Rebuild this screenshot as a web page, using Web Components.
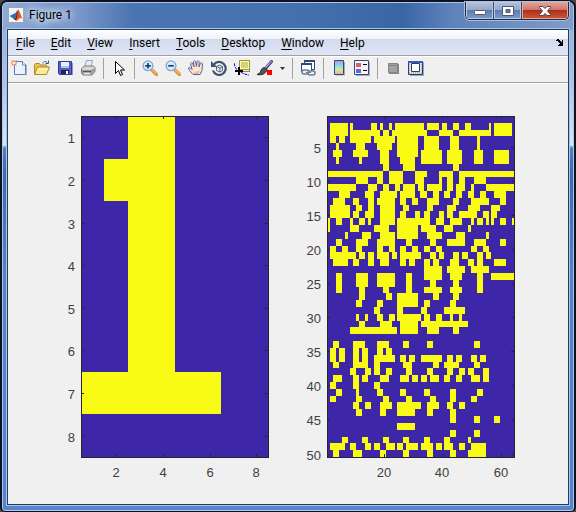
<!DOCTYPE html>
<html lang="en">
<head>
<meta charset="utf-8">
<title>Figure 1</title>
<style>
  html, body { height: 100%; }
  body { margin: 0; background: #4a4a4c; font: 12px/16px Roboto, "Open Sans", sans-serif; color: #000; }
</style>
</head>
<body>
<figure-window caption="Figure 1">
  <menu-bar slot="menu" items="File,Edit,View,Insert,Tools,Desktop,Window,Help"></menu-bar>
  <tool-bar slot="tools"></tool-bar>
  <axes-plot data-set="digit"></axes-plot>
  <axes-plot data-set="features"></axes-plot>
</figure-window>

<script>
const define = (name, markup, setup) => {
  const template = document.createElement('template');
  template.innerHTML = markup;
  customElements.define(name, class extends HTMLElement {
    constructor() {
      super();
      this.attachShadow({ mode: 'open' }).append(template.content.cloneNode(true));
    }
    connectedCallback() { if (setup) setup(this, this.shadowRoot); }
  });
};

define('figure-window', `
<style>
  :host { display: flex; flex-direction: column; box-sizing: border-box; min-height: 100vh;
    padding: 0 5px 6px; border: 1px solid #10131f; border-width: 2px 2px 1px; border-radius: 7px 7px 5px 5px;
    box-shadow: inset 0 0 0 1px #a9c6ec;
    background:
      linear-gradient(90deg, #8fa9d5 0, #7795c7 80px, #4b74b2 130px, #4470ae 300px, #3a66a6 400px, #5f82bb 450px, #7f9cca 100%) top / 100% 28px no-repeat,
      linear-gradient(#8ca8d6, #a9c0e4 70px, #dbe5f5 143px, #4f7fc4 146px, #3f69ad 172px, #5583c8 270px, #5585cc) top; }
  header { display: flex; align-items: flex-start; height: 27px; }
  .logo { width: 16px; height: 16px; margin: 5px 5px 0 1px; }
  h1 { flex: 1; margin: 5px 0 0; font: inherit; line-height: 16px; text-shadow: 0 0 6px #dce6f5, 0 0 8px #dce6f5, 0 0 10px #dce6f5; }
  .controls { display: flex; height: 17px; border: 1px solid #202a3c; border-top: 0; border-radius: 0 0 5px 5px; overflow: hidden; box-shadow: 0 0 0 1px #a9c0e3; }
  button { display: flex; align-items: center; justify-content: center; width: 28px; padding: 0; border: 0; border-right: 1px solid #3a4a68;
    background: linear-gradient(#b4c2da, #93a7ca 48%, #5f7cae 50%, #7c9aca); box-shadow: inset 0 0 0 1px #b8c9e3; }
  .close { width: 46px; border: 0; background: linear-gradient(#e0a79a, #cf7365 48%, #b0301b 50%, #c95a3c); box-shadow: inset 0 0 0 1px #e5a79a; }
  main { flex: 1; display: flex; flex-direction: column; border: 1px solid #2a3b5c; background: #f0f0f0; box-shadow: 0 0 0 1px #a5c4ea; }
  .plots { display: grid; grid-template-columns: 1fr 1fr; }
</style>
<header>
  <svg class="logo" viewBox="0 0 16 16"><path fill="#f2f4f8" stroke="#9aa5b8" d="M.5.5h15v15H.5z"/><path fill="#2c6fb2" d="m1.500 9 4-2 2-1 2-3-1 6-2.500 3z"/><path fill="#7a1f12" d="m5.500 12 2-1.500L10 2.500l1 3-1 5-2 3z"/><path fill="#e4591a" d="M10 2.500c1 0 2.500 5 4.500 9.500-2-1.500-3-1-4 .5-.8 1-1.500 1.500-2.500 1 1.500-3 1.500-7 2-11z"/></svg>
  <h1></h1>
  <div class="controls">
    <button aria-label="Minimize"><svg width="14" height="10"><rect x="1.500" y="4.500" width="11" height="4" rx="1" fill="#fff" stroke="#4b5870"/></svg></button>
    <button aria-label="Maximize"><svg width="14" height="12"><path fill="#fff" fill-rule="evenodd" stroke="#4b5870" d="M1.500 1.500h11v9h-11zM5 4.500h4v3H5z"/></svg></button>
    <button class="close" aria-label="Close"><svg width="14" height="12"><path fill="#fff" stroke="#5a3d48" d="M1.500 1.500h3.500l2 2 2-2h3.500v1L9.500 6l3 3.500v1H9l-2-2-2 2H1.500v-1l3-3.500-3-3.500z"/></svg></button>
  </div>
</header>
<main>
  <slot name="menu"></slot>
  <slot name="tools"></slot>
  <div class="plots"><slot></slot></div>
</main>`,
(el, root) => { root.querySelector('h1').textContent = el.getAttribute('caption'); });

define('menu-bar', `
<style>
  :host { display: flex; align-items: center; height: 25px; border-bottom: 1px solid #a0a0a0;
    background: linear-gradient(#fff, #eef2fa 35%, #d3daec 37%, #e0e6f6); }
  nav { display: flex; flex: 1; }
  button { margin: 0; padding: 0 8px; border: 0; background: none; font: inherit; color: inherit; }
  button.arrow { padding: 0 4px; line-height: 0; }
  u { text-underline-offset: 2px; text-decoration-skip-ink: none; }
</style>
<nav></nav>
<button class="arrow" aria-label="Dock figure"><svg width="8" height="7" shape-rendering="crispEdges"><path d="M1 0h2v1h1v1h1v1h1V1h1v6H2V6h1V5h1V4H3V3H2V2H0V1h1z"/></svg></button>`,
(el, root) => {
  root.querySelector('nav').innerHTML = el.getAttribute('items').split(',')
    .map(t => `<button><u>${t[0]}</u>${t.slice(1)}</button>`).join('');
});

const lens = sign => `<path stroke="#e0953c" stroke-width="3.500" stroke-linecap="round" d="m10.500 10.500 4 4"/><path stroke="#f7cf92" stroke-linecap="round" d="m10.500 10 4 4"/><circle cx="6" cy="5.800" r="4.900" fill="#d5eef8" stroke="#7fa6d6" stroke-width="1.300"/><path stroke="#1c3e78" stroke-width="1.700" d="${sign}"/>`;
const icons = {
  'New Figure': `<path fill="#aab4c4" d="M5 15h11V5l-1-1v10H5z"/><path fill="#eaf3fd" stroke="#5f7fb4" d="M3.500 1.500h8l3 3.500v9.500h-11z"/><path fill="#fff" stroke="#5f7fb4" d="M11.500 1.500V5h3"/><path stroke="#e07040" d="M3 0v6M0 3h6M.5.5l5 5m0-5-5 5"/><circle cx="3" cy="3" r="1.500" fill="#fff0b8"/>`,
  'Open File': `<path fill="#e9c654" stroke="#b08a24" d="M.5 14V4.500l1-1h4l1 1.500h6v3"/><path fill="#fbea92" stroke="#b08a24" d="m.5 14.500 3-7.500h12l-3 7.500z"/><path fill="#fff4b8" d="M4.500 8h9l-.5 2H4z"/><path stroke="#3b5b86" d="M8.500 3.500c2-3 4-2.500 5 0M11.500 3.500h3v-3"/>`,
  'Save Figure': `<path fill="#8f95b5" d="M2 15h14V3h-1v11H2z"/><path fill="#4f5fd0" stroke="#2f3b9c" d="M1.500 1.500h13v13h-12l-1-1z"/><path fill="#e8effc" d="M4 2h8v6H4z"/><path fill="#b2c1ea" d="M4 6h8v2H4z"/><path fill="#20264e" d="M4 10h8v4H4z"/><path fill="#fff" d="M9 11h2v3H9z"/>`,
  'Print Figure': `<path fill="#e2eefb" stroke="#90a5bd" d="m4.500 7 2-6.500h6L11 7"/><path fill="#d6d6d4" stroke="#777" d="m1.500 8.500 3-2.500h9l1.500 1.500v4l-3 3.500h-9l-1.500-2z"/><path fill="#9c9c9c" d="m2 10h9.500l3-2v3l-3 3.500H3l-1-2z"/><path stroke="#555" d="M3 11.500h8"/><path stroke="#e7e7e7" stroke-width="1.500" d="M4 13.500h6"/><path stroke="#6cb04c" d="M12.500 10h1"/>`,
  'Edit Plot': `<path fill="#fff" stroke="#000" d="M4.500 1.500v12l3-3 2 5 2-1-2-4.500h4z"/>`,
  'Zoom In': lens('M6 3v5.600M3.200 5.800h5.600'),
  'Zoom Out': lens('M3.200 5.800h5.600'),
  'Pan': `<path fill="#ffe3cc" stroke="#4b679f" d="m5 14.500-3.500-4-1-2.500L2 7.500l2 2-1.500-6 1-1 1 .5L6 7 5.500 1.500l1-1 1 1L8.500 6.500l.5-5 1-1 1 1V7l1.500-4 1-.5 1 1-.5 7-2 4z"/><path fill="#f3b994" d="m6 14-.5-1.500 6-2-.5 3.500z"/>`,
  'Rotate 3D': `<path stroke="#3f536f" stroke-width="2.200" d="M3 4.500a6.500 6.500 0 1 1-1 6"/><path fill="#3f536f" d="M0 1v6h6z"/><path fill="#eef2f5" stroke="#54667c" d="m5.500 6.500 3-1.500 3 1.500v4L9 12l-3.500-1.500zM5.500 6.500 9 8l2.500-1.500M9 8v4"/>`,
  'Data Cursor': `<path fill="#8c8a52" d="M7 11h8V2h1v10H7z"/><path fill="#ffffa2" stroke="#99943c" d="M5.500.5h10v9h-10z"/><path stroke="#a5a063" d="M7 3h7M7 5h7M7 7h7"/><path stroke="#0000df" stroke-dasharray="3 1" d="M0 3c1 5 3 8 6 9s6 3 9 3"/><path stroke="#000" stroke-width="2" d="M5 7v8M1 11h8"/>`,
  'Brush/Select Data': `<path stroke="#414d90" stroke-width="3" stroke-linecap="round" d="M14.500 1.500 9 8"/><path stroke="#bec8ee" d="m14.500 1-6 7"/><path fill="#555" stroke="#222" d="M8.500 8c-3-1-4 1-5 3.500-.5 1.500-2 2.500-3.500 3 5 1 9-1 10-5z"/><path fill="red" d="M10 10h5v5h-5z"/>`,
  'Link Plot': `<path fill="#fff" stroke="#304878" d="M4.500.500h10v9h-10z"/><path fill="#304878" d="M4 0h11v2H4z"/><path fill="#fff" stroke="#304878" d="M1.500 3.500h10v8h-10z"/><path fill="#304878" d="M1 3h11v2H1z"/><rect x="2" y="10" width="7" height="4" rx="2" fill="#f0f0f0" stroke="#6d7f95" stroke-width="1.500"/><rect x="8" y="11" width="7" height="4" rx="2" fill="#f0f0f0" stroke="#6d7f95" stroke-width="1.500"/><path stroke="#6d7f95" d="M6 12.500h5"/>`,
  'Insert Colorbar': `<defs><linearGradient id="g" x2="0" y2="1"><stop stop-color="#c493d2"/><stop offset=".3" stop-color="#8bd0f2"/><stop offset=".65" stop-color="#c8edaa"/><stop offset="1" stop-color="#f4ae78"/></linearGradient></defs><path fill="#aaa" d="M5 15.500h9V2h-1v13H5z"/><path fill="url(#g)" stroke="#304880" d="M3.500.5h9v14h-9z"/>`,
  'Insert Legend': `<path fill="#aaa" d="M2 16h14V2h-1v13H2z"/><path fill="#f1f5fa" stroke="#304880" d="M.5.500h14v14H.5z"/><path fill="#e26058" d="M2 3h5v4H2z"/><path fill="#6465dc" d="M2 9h5v4H2z"/><path stroke="#000" d="M9 4.500h4M9 10.500h4"/>`,
  'Hide Plot Tools': `<path fill="#858585" d="M4 14h10V4h-1v9H4z"/><path fill="#a2a2a2" stroke="#838383" d="M3.500 3.500h9v9h-9z"/><path stroke="#838383" d="M3 5.500h10"/>`,
  'Show Plot Tools': `<path fill="#9aa6bc" d="M2 16h14V2h-1v13H2z"/><path fill="#e1e6dc" stroke="#244084" d="M.5 1.500h14v13H.5z"/><path fill="#3659b5" d="M0 1h15v2H0z"/><path fill="#fff" stroke="#244084" d="M3.500 3.500h8v8h-8z"/><path stroke="#bab992" stroke-dasharray="1 1" d="M1 12.500h13M1 13.500h13M1.500 4v8M13.500 4v8"/>`
};

define('tool-bar', `
<style>
  :host { display: flex; align-items: center; gap: 7px; height: 27px; padding: 0 3px 3px; box-sizing: border-box;
    border-top: 1px solid #fff; border-bottom: 1px solid #a0a0a0; box-shadow: 0 1px #fff; }
  button { display: block; padding: 0; border: 0; background: none; line-height: 0; }
  svg { display: block; fill: none; }
  hr { width: 1px; height: 21px; margin: 0; border: 0; background: #a0a0a0; }
</style>`,
(el, root) => {
  const names = Object.keys(icons);
  const breaks = ['Print Figure', 'Edit Plot', 'Brush/Select Data', 'Link Plot', 'Insert Legend'];
  root.innerHTML += names.map(name =>
    `<button aria-label="${name}"><svg width="16" height="16" viewBox="0 0 16 16">${icons[name]}</svg></button>` +
    (name.startsWith('Brush') ? '<button aria-label="Brush options"><svg width="5" height="3"><path fill="#333" d="M0 0h5L2.500 3z"/></svg></button>' : '') +
    (breaks.includes(name) ? '<hr>' : '')).join('');
});

const features = `
30-84 90-99 153-171 180-189 207-216 225-240 240-312 321-357 366-381 399-417 435-453 507-513 522-576
30-84 90-180 189-207 216-321 357-399 417-513 522-576
30-48 57-75 90-153 162-225 231-294 312-357 390-417 471-480
48-57 108-135 171-216 231-294 312-357 390-417 471-480
39-66 99-144 180-207 231-294 303-366 381-426 462-489 522-567
48-57 117-126 180-207 240-285 303-366 381-426 462-489 522-567
189-207 249-285 399-417
24-189 207-249 285-321 357-399 417-582
108-144 171-189 207-249 285-312 357-366 381-399 417-435 462-498
24-108 144-171 189-207 225-240 249-285 294-312 321-366 381-399 408-435 453-462 498-582
57-90 135-162 180-231 240-285 300-321 339-357 372-390 408-426 444-462 480-498 522-558
39-75 99-117 144-162 171-225 240-258 276-294 321-357 399-417 453-507 540-558
30-90 108-126 144-162 180-225 249-267 321-339 381-408 444-480 513-540
30-90 99-117 135-162 180-225 240-258 285-300 312-330 357-372 381-399 417-471 489-507 513-531
24-30 48-66 90-99 117-135 144-153 180-225 231-330 348-372 390-426 453-462 471-489 498-507 513-522 540-558 576-582
24-30 90-117 162-207 231-294 303-348 372-399 444-453
75-84 126-153 180-225 231-294 321-366 408-435 498-507
48-66 108-144 171-225 258-276 330-348 381-435 462-498 540-558
30-48 66-84 108-126 171-189 207-225 240-258 276-294 312-330 348-366 453-471 489-507
30-108 117-135 144-162 171-207 216-231 240-303 330-348 357-372 399-417 426-444 471-489 498-513
39-84 99-117 144-162 180-207 240-258 267-285 312-330 339-357 390-417 444-462 471-489 522-558
312-366 381-435 453-507
48-66 108-144 171-225 258-276 312-366 390-426 471-489 513-582
48-66 108-144 171-225 258-276 330-348 399-417 471-489
48-66 117-135 189-207 258-276 312-366 390-426 471-489
117-135 198-216 231-294 339-357 399-417
108-126 171-189 231-294 312-330 390-408
162-180 231-249 303-321 372-435
108-117 135-144 171-189 207-225 231-303 312-330 348-366 390-399 417-426
117-135 180-216 240-294 303-444
90-231 240-294 321-357 399-417

39-57 99-135 171-207 249-267 321-339 462-480
30-48 57-75 99-117 126-144 171-189 198-216
30-48 57-75 99-117 126-144 162-225 240-258 267-285 303-366 381-399 408-426 453-471 480-498
39-57 99-144 162-180 249-276 339-357 372-417 462-480
90-108 135-153 162-180 198-216 258-276 321-339 381-399 417-435 444-462 489-507
39-66 99-117 126-144 180-207 240-267 276-294 303-321 330-357 372-390 408-426 453-480 489-507
30-48 99-117 162-180
48-66 108-117 171-189 240-258 312-330 390-408 471-489
30-48 108-126 189-207 258-276 330-348 390-408 453-471
99-117 135-153 180-216 231-303 321-357 381-399 417-435
108-126 180-198 231-285 321-339 390-408
390-408 462-480 522-540
231-285
390-408 462-480
66-84 126-144 189-207 249-267 312-330 372-390 444-453
30-75 90-108 135-153 162-180 198-225 231-249 258-294 303-339 348-366 372-399 417-435 453-498
39-57 99-126 180-198 249-267 321-339 390-408 444-498`.split('\n')
  .map(line => line.split(' ').filter(Boolean).map(run => run.split('-').map(v => (v - 22) / 3 / 187 * 64)));

const dataSets = {
  digit: { left: 73, cols: 8, xticks: [2, 4, 6, 8], yticks: [1, 2, 3, 4, 5, 6, 7, 8],
    rows: [[[2, 4]], [[1, 4]], [[2, 4]], [[2, 4]], [[2, 4]], [[2, 4]], [[0, 6]], []] },
  features: { left: 39, cols: 64, xticks: [20, 40, 60], yticks: [5, 10, 15, 20, 25, 30, 35, 40, 45, 50], rows: features }
};

define('axes-plot', `
<style>
  :host { display: block; }
  svg { display: block; width: 100%; font: 13px "Liberation Sans", Arial, sans-serif; fill: #404040; }
</style>
<svg viewBox="0 0 280 400"></svg>`,
(el, root) => {
  const { left, cols, rows, xticks, yticks } = dataSets[el.dataset.set];
  const top = 33, width = 187, height = 341;
  const px = c => Math.round(c * width / cols);
  const py = r => Math.round(r * height / rows.length);
  const cells = rows.flatMap((runs, r) => runs.map(([a, b]) =>
    `M${px(a)} ${py(r)}H${px(b)}V${py(r + 1)}H${px(a)}z`)).join('');
  const tx = xticks.map(v => [v, px(v - 0.5)]);
  const ty = yticks.map(v => [v, py(v - 0.5)]);
  root.querySelector('svg').innerHTML = `
    <g transform="translate(${left} ${top})">
      <g shape-rendering="crispEdges">
        <path fill="#3e26a8" d="M0 0h${width}v${height}H0z"/>
        <path fill="#f9fb15" d="${cells}"/>
        <path fill="none" stroke="#262626" d="M0 0h${width}v${height}H0z${
          tx.map(([, x]) => `M${x} 0v3M${x} ${height}v-3`).join('')}${
          ty.map(([, y]) => `M0 ${y}h3M${width} ${y}h-3`).join('')}"/>
      </g>
      <g text-anchor="middle">${tx.map(([v, x]) => `<text x="${x}" y="${height + 20}">${v}</text>`).join('')}</g>
      <g text-anchor="end">${ty.map(([v, y]) => `<text x="-6" y="${y + 6}">${v}</text>`).join('')}</g>
    </g>`;
});
</script>
</body>
</html>
